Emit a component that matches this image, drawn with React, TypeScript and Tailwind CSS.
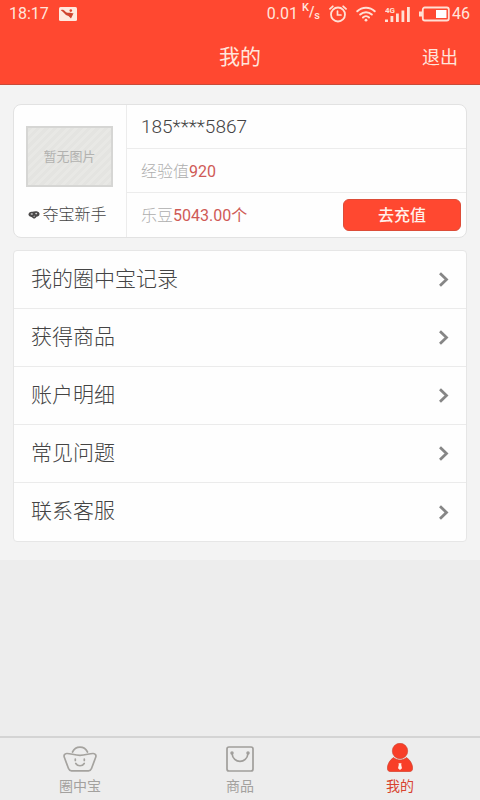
import type { ReactNode } from 'react';

const menuItems = ['我的圈中宝记录', '获得商品', '账户明细', '常见问题', '联系客服'];

function PictureIcon() {
  return (
    <svg className="w-[18px] h-[14px]" viewBox="0 0 18 14" fill="none">
      <rect width="18" height="14" rx="1.5" fill="#ffe9df" />
      <path d="M1.8 3.2C3.5 2.4 5 3 6.300 4.400 7.500 5.600 8.800 6 10 5.800 11.500 5.700 12.500 6.300 14.500 6.300L12 11.500 9.500 9C7.500 8.600 6.300 7.500 5 6 4 4.800 3 3.800 1.800 3.200z" fill="#cf4430" />
      <circle cx="11.800" cy="3.600" r="1.300" fill="#e0452f" />
    </svg>
  );
}

function AlarmIcon() {
  return (
    <svg className="w-[18px] h-[18px]" viewBox="0 0 18 18" fill="none" stroke="#ffe0d5" strokeLinecap="round">
      <circle cx="9" cy="9.500" r="7" strokeWidth="1.800" />
      <path d="M8.500 6v4h3.500" strokeWidth="1.700" />
      <path d="M1 3.800L3.800 1.300M17 3.800l-2.800-2.500" strokeWidth="1.800" />
    </svg>
  );
}

function WifiIcon() {
  return (
    <svg className="w-5 h-4" viewBox="0 0 20 16" fill="none" stroke="#ffe0d5" strokeWidth="2" strokeLinecap="round">
      <path d="M1.300 5.200a12.500 12.500 0 0 1 17.400 0M4.200 8.500a8.300 8.300 0 0 1 11.600 0M7 11.500a4.300 4.300 0 0 1 6 0" />
      <circle cx="10" cy="14.200" r="1.400" fill="#ffe0d5" stroke="none" />
    </svg>
  );
}

function SignalIcon() {
  return (
    <svg className="w-[25px] h-[17px]" viewBox="0 0 25 17" fill="#ffe0d5">
      <path d="M0 13.500h3V16H0zM5.500 10h2.800v6H5.500zM11 7.500h2.800V16H11zM16.500 4.500h2.800V16h-2.800zM22 1h2.800v15H22z" />
      <text x="0" y="7" fontSize="8" fontWeight="700">4G</text>
    </svg>
  );
}

function BatteryIcon() {
  return (
    <svg className="w-[31px] h-4" viewBox="0 0 31 16" fill="none">
      <rect x="3.800" y="1.500" width="26" height="13" rx="2" stroke="#ffe0d5" strokeWidth="1.800" />
      <path d="M0 5.500h3v5H0z" fill="#ffe0d5" />
      <path d="M17 4h10.500v8H17z" fill="#fff" />
    </svg>
  );
}

function BadgeIcon() {
  return (
    <svg className="w-3 h-2" viewBox="0 0 12 8">
      <path d="M.5 4C.2 1.500 2.500.3 4.500.8 6.500.2 10.500-.2 11.500 2.500 11.800 4.800 10 5.500 8.500 5.800 7.500 7.800 6 8 4.800 7 4 5.800 1.500 6 .5 4z" fill="#4a4848" />
      <ellipse cx="3.800" cy="3" rx="1.200" ry=".8" fill="#d5d5d5" />
      <ellipse cx="8.200" cy="2.600" rx="1" ry=".8" fill="#d5d5d5" />
      <path d="M5 5.200l2.200-.7-.8 1.800z" fill="#aaa" />
    </svg>
  );
}

function IngotIcon() {
  return (
    <svg className="w-[34px] h-[26px]" viewBox="0 0 34 26" fill="none" stroke="#a5a39f" strokeWidth="1.700" strokeLinecap="round" strokeLinejoin="round">
      <path d="M9.500 6C11 3 13.500 1.200 17 1.200S23 3 24.500 6" />
      <path d="M3.800 7.500C7.500 7.300 11.500 9.300 17 9.300s9.500-2 13.200-1.800c2.300.2 3.200 2 2.500 3.800l-4.200 11.200c-.6 1.600-1.500 2.300-3 2.300h-17c-1.500 0-2.400-.7-3-2.300L1.300 11.300C.6 9.500 1.500 7.700 3.800 7.500z" />
      <path d="M12.300 13v1.500M21.300 13v1.500M12.800 17.500c1.800 3 6.600 3 8.400 0" />
    </svg>
  );
}

function BagIcon() {
  return (
    <svg className="w-7 h-[26px]" viewBox="0 0 28 26" fill="none" stroke="#a09e9b" strokeLinecap="round">
      <rect x="1" y="1" width="26" height="24" rx="2" strokeWidth="1.700" />
      <path d="M6 7.500c1 10.500 15 10.500 16 0" strokeWidth="1.700" />
      <circle cx="6" cy="7" r="1" strokeWidth="1.500" />
      <circle cx="22" cy="7" r="1" strokeWidth="1.500" />
    </svg>
  );
}

function UserIcon() {
  return (
    <svg className="w-[26px] h-[29px]" viewBox="0 0 26 29">
      <circle cx="13" cy="8" r="7.700" fill="#f83e28" stroke="#c9432f" strokeWidth=".6" />
      <path d="M6.500 14.500c3.500 3.300 9.500 3.300 13 0 3.500 2.300 6 6.500 6.200 10.500.1 2.500-1.200 3.700-3.700 3.700H4C1.500 28.700.2 27.500.3 25c.2-4 2.700-8.200 6.200-10.500z" fill="#f83e28" stroke="#c9432f" strokeWidth=".6" />
      <path d="M11.500 20.300h3l-.3 1.500.8 3.400-2 1.800-2-1.800.8-3.400z" fill="#fff0ea" />
    </svg>
  );
}

function NavItem({ icon, label, active = false }: { icon: ReactNode; label: string; active?: boolean }) {
  return (
    <a
      href="#"
      className={`flex flex-1 flex-col items-center justify-end text-sm leading-5 pb-1 ${active ? 'text-[#d8432f]' : 'text-[#a3a19e]'}`}
    >
      {icon}
      <span className="mt-1">{label}</span>
    </a>
  );
}

export default function App() {
  return (
    <div className="min-h-screen flex flex-col bg-[#ededed] text-[#444] font-light font-[Roboto,'Noto_Sans_CJK_SC',sans-serif]">
      <header className="bg-[#ff4830] border-b border-[#c94a38] text-[#ffe5dc] font-normal">
        {/* Status bar */}
        <div className="h-7 pl-[9px] pr-[10px] flex items-center justify-between text-base leading-5">
          <div className="flex items-center gap-[10px]">
            <span>18:17</span>
            <PictureIcon />
          </div>
          <div className="flex items-center gap-[9px]">
            <span className="flex items-center gap-1">
              0.01
              <span className="flex text-sm leading-3 font-medium">
                <span className="text-[11px] -mt-1">K</span>/<span className="text-[11px] mt-1">s</span>
              </span>
            </span>
            <AlarmIcon />
            <WifiIcon />
            <SignalIcon />
            <span className="flex items-center gap-[2px]">
              <BatteryIcon />
              46
            </span>
          </div>
        </div>
        <div className="h-14 pt-1 grid grid-cols-3 items-center px-[22px]">
          <h1 className="col-start-2 text-center text-[21px]">我的</h1>
          <button className="justify-self-end text-lg">退出</button>
        </div>
      </header>

      <main className="bg-[#f3f3f3] px-[13px] pt-[19px] pb-[18px] flex flex-col gap-3">
        {/* Account card */}
        <section className="flex bg-[#fefefe] border border-[#e2e2e2] rounded-lg">
          <div className="w-[113px] shrink-0 border-r border-[#ececec] flex flex-col items-center pt-[21px] pr-px">
            <div className="w-[87px] h-[61px] border-2 border-[#d6d6d4] bg-[repeating-linear-gradient(135deg,#e4e4e1_0px,#e4e4e1_3px,#e8e8e5_3px,#e8e8e5_6px)] flex items-center justify-center text-[13px] text-[#b2b2b0] font-normal">
              暂无图片
            </div>
            <div className="mt-4 pr-1 flex items-center gap-[2px] text-base">
              <BadgeIcon />
              夺宝新手
            </div>
          </div>
          <div className="flex-1 divide-y divide-[#ececec]">
            <div className="h-11 pt-[2px] flex items-center px-[14px] text-[19px]">185****5867</div>
            <div className="h-11 pt-[2px] flex items-center px-[14px] text-base text-[#aeaeae]">
              经验值<span className="text-[#cf5a56] font-normal">920</span>
            </div>
            <div className="h-11 flex items-center pl-[14px] pr-[5px] text-base text-[#aeaeae]">
              <span className="pt-[2px]">
                乐豆<span className="text-[#cf5a56] font-normal">5043.00个</span>
              </span>
              <button className="ml-auto w-[118px] h-8 pt-[2px] rounded-md border border-[#dd4c38] bg-[#ff4830] text-[#fff0ea] font-medium">
                去充值
              </button>
            </div>
          </div>
        </section>

        {/* Menu */}
        <nav className="bg-[#fefefe] border border-[#e6e6e6] rounded-sm divide-y divide-[#ebebeb]">
          {menuItems.map((item) => (
            <a key={item} href="#" className="h-[58px] flex items-center justify-between px-[17px] text-[21px]">
              <span>{item}</span>
              <svg className="w-[10px] h-[15px]" viewBox="0 0 10 15" fill="none" stroke="#868686" strokeWidth="2.800">
                <path d="M1 1.200L7.500 7.500 1 13.800" />
              </svg>
            </a>
          ))}
        </nav>
      </main>

      <footer className="mt-auto h-16 border-t-2 border-[#d4d4d4] flex font-normal">
        <NavItem icon={<IngotIcon />} label="圈中宝" />
        <NavItem icon={<BagIcon />} label="商品" />
        <NavItem icon={<UserIcon />} label="我的" active />
      </footer>
    </div>
  );
}
